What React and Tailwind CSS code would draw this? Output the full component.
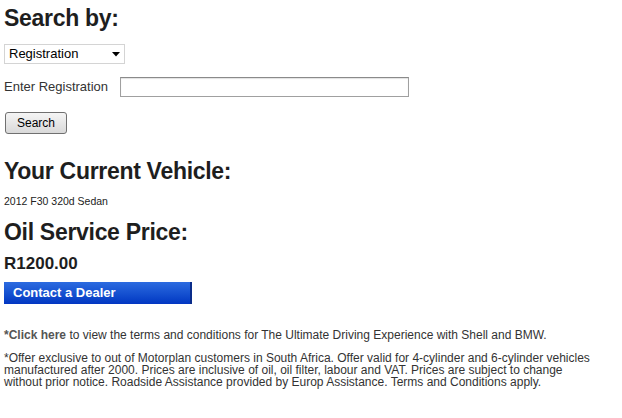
export default function App() {
  return (
    <div className="w-[622px] h-[418px] bg-white text-[#333] overflow-hidden" style={{ fontFamily: '"Liberation Sans", Arial, sans-serif' }}>
      <div className="pl-[4px] pt-[5px]">
        <h1 className="text-[23px] leading-[26px] font-bold text-[#1e1e1e] tracking-[-0.3px]">Search by:</h1>
        <div className="mt-[13px] w-[121px] h-[20px] border border-[#d4d4d4] bg-white flex items-center justify-between pl-[4px] pr-[4px]">
          <span className="text-[13px] text-black">Registration</span>
          <svg width="8" height="5" viewBox="0 0 8 5"><path d="M0 0 L8 0 L4 4.5 Z" fill="#000" /></svg>
        </div>
        <div className="mt-[13px] flex items-center h-[20px]">
          <span className="text-[13px] text-[#333] w-[116px]">Enter Registration</span>
          <div className="w-[289px] h-[20px] border border-[#a0a0a0] border-t-[#8a8a8a] bg-white shadow-[inset_0_1px_1px_rgba(0,0,0,0.12)]" />
        </div>
        <div className="mt-[15px] ml-[1px] w-[62px] h-[22px] rounded-[3px] border border-[#707070] bg-gradient-to-b from-[#f5f5f5] to-[#d9d9d9] flex items-center justify-center text-[12px] text-black">
          Search
        </div>
        <h2 className="mt-[24px] text-[23px] leading-[26px] font-bold text-[#1e1e1e] tracking-[-0.3px]">Your Current Vehicle:</h2>
        <div className="mt-[11px] text-[10.5px] leading-[12px] text-[#222]">2012 F30 320d Sedan</div>
        <h2 className="mt-[12px] text-[23px] leading-[26px] font-bold text-[#1e1e1e] tracking-[-0.3px]">Oil Service Price:</h2>
        <div className="mt-[9px] text-[17px] leading-[20px] font-bold text-[#1e1e1e]">R1200.00</div>
        <div className="mt-[8px] w-[188px] h-[22px] bg-gradient-to-b from-[#2c6be0] to-[#0336c2] border-r-2 border-[#0a2c8a] flex items-center pl-[9px] text-[13px] font-bold text-white">
          Contact a Dealer
        </div>
        <p className="mt-[24px] text-[12px] leading-[14px] text-[#333]">
          <span className="font-bold text-[#555]">*Click here</span> to view the terms and conditions for The Ultimate Driving Experience with Shell and BMW.
        </p>
        <p className="mt-[10px] text-[12px] leading-[12px] text-[#333] w-[598px]">
          *Offer exclusive to out of Motorplan customers in South Africa. Offer valid for 4-cylinder and 6-cylinder vehicles manufactured after 2000. Prices are inclusive of oil, oil filter, labour and VAT. Prices are subject to change without prior notice. Roadside Assistance provided by Europ Assistance. Terms and Conditions apply.
        </p>
      </div>
    </div>
  );
}
